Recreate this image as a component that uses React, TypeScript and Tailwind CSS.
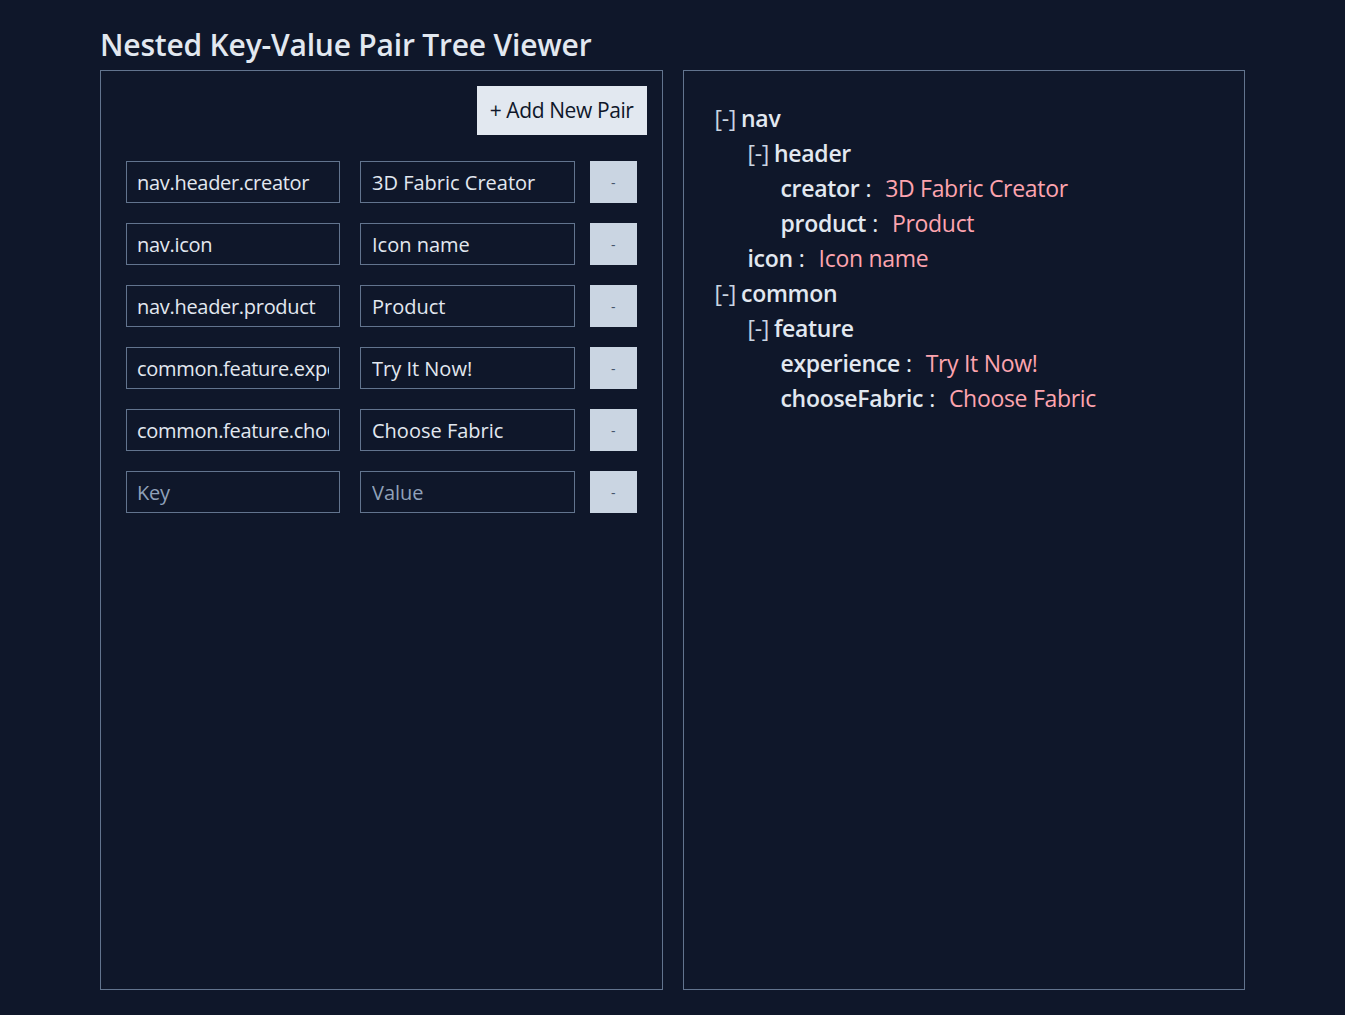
import { useState } from 'react';

type Pair = { id: number; key: string; value: string };

type TreeNode = { [k: string]: TreeNode | string };

const initialPairs: Pair[] = [
  { id: 1, key: 'nav.header.creator', value: '3D Fabric Creator' },
  { id: 2, key: 'nav.icon', value: 'Icon name' },
  { id: 3, key: 'nav.header.product', value: 'Product' },
  { id: 4, key: 'common.feature.experience', value: 'Try It Now!' },
  { id: 5, key: 'common.feature.chooseFabric', value: 'Choose Fabric' },
  { id: 6, key: '', value: '' },
];

function buildTree(pairs: Pair[]): TreeNode {
  const root: TreeNode = {};
  for (const p of pairs) {
    if (!p.key) continue;
    const parts = p.key.split('.');
    let node = root;
    parts.forEach((part, i) => {
      if (i === parts.length - 1) {
        node[part] = p.value;
      } else {
        if (typeof node[part] !== 'object') node[part] = {};
        node = node[part] as TreeNode;
      }
    });
  }
  return root;
}

function TreeView({ node, depth }: { node: TreeNode; depth: number }) {
  const [collapsed, setCollapsed] = useState<Record<string, boolean>>({});

  return (
    <>
      {Object.entries(node).map(([k, v]) => (
        <div key={k}>
          {typeof v === 'string' ? (
            <div className="flex items-center h-[35px]" style={{ paddingLeft: depth * 33 }}>
              <span className="font-semibold text-slate-200">{k}</span>
              <span className="ml-[6px] text-slate-200">:</span>
              <span className="ml-[14px] text-[#fda4af]">{v}</span>
            </div>
          ) : (
            <>
              <div
                className="flex items-center h-[35px] cursor-pointer"
                style={{ paddingLeft: depth * 33 }}
                onClick={() => setCollapsed((c) => ({ ...c, [k]: !c[k] }))}
              >
                <span className="text-slate-300">{collapsed[k] ? '[+]' : '[-]'}</span>
                <span className="ml-[5px] font-semibold text-slate-200">{k}</span>
              </div>
              {!collapsed[k] && <TreeView node={v} depth={depth + 1} />}
            </>
          )}
        </div>
      ))}
    </>
  );
}

export default function App() {
  const [pairs, setPairs] = useState<Pair[]>(initialPairs);

  const update = (id: number, field: 'key' | 'value', val: string) =>
    setPairs((ps) => ps.map((p) => (p.id === id ? { ...p, [field]: val } : p)));

  const tree = buildTree(pairs);

  return (
    <div className="min-h-screen bg-[#0f172a] font-['Segoe_UI','Open_Sans',sans-serif] text-slate-200">
      <div className="w-[1145px] mx-auto pt-[23px] pb-[25px]">
        <h1 className="text-[30px] leading-[44px] font-semibold text-slate-200 tracking-[-0.2px]">
          Nested Key-Value Pair Tree Viewer
        </h1>

        <div className="grid grid-cols-2 gap-[20px] mt-[3px] h-[920px]">
          {/* Editor */}
          <div className="border border-slate-500 p-[15px] flex flex-col">
            <div className="flex justify-end">
              <button
                onClick={() => setPairs((ps) => [...ps, { id: Date.now(), key: '', value: '' }])}
                className="h-[49px] px-[13px] bg-slate-200 text-[#0f172a] text-[21px] tracking-[-0.4px]"
              >
                + Add New Pair
              </button>
            </div>

            <div className="flex flex-col gap-[20px] mt-[26px] px-[10px]">
              {pairs.map((p) => (
                <div key={p.id} className="flex items-center">
                  <input
                    value={p.key}
                    placeholder="Key"
                    onChange={(e) => update(p.id, 'key', e.target.value)}
                    className="w-[214px] h-[42px] px-[10px] bg-transparent border border-slate-500 text-[20px] text-slate-200 placeholder:text-slate-400 outline-none tracking-[-0.3px]"
                  />
                  <input
                    value={p.value}
                    placeholder="Value"
                    onChange={(e) => update(p.id, 'value', e.target.value)}
                    className="ml-[20px] w-[215px] h-[42px] px-[11px] bg-transparent border border-slate-500 text-[20px] text-slate-200 placeholder:text-slate-400 outline-none"
                  />
                  <button
                    onClick={() => setPairs((ps) => ps.filter((x) => x.id !== p.id))}
                    className="ml-[15px] w-[47px] h-[42px] bg-slate-300 text-slate-600 text-[14px]"
                  >
                    -
                  </button>
                </div>
              ))}
            </div>
          </div>

          {/* Tree */}
          <div className="border border-slate-500 px-[31px] pt-[30px] text-[23px] tracking-[-0.3px]">
            <TreeView node={tree} depth={0} />
          </div>
        </div>
      </div>
    </div>
  );
}
